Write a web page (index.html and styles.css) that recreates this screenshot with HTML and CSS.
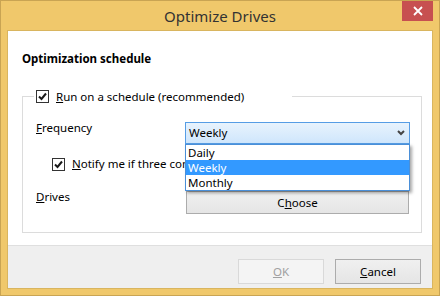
FILE: index.html
```html
<!DOCTYPE html>
<html>
<head>
    <title>Optimize Drives</title>
    <link rel="stylesheet" href="styles.css">
</head>
<body>
    <div class="window">
        <div class="titlebar">
            <span></span>
            <div class="title">Optimize Drives</div>
            <div class="close">
                <svg width="10" height="10" viewBox="0 0 10 10"><path d="M1 1L9 9M9 1L1 9" stroke="#fff" stroke-width="1.8" fill="none"/></svg>
            </div>
        </div>

        <div class="client">
            <div class="main">
                <h1 class="heading">Optimization schedule</h1>

                <fieldset class="group">
                    <legend class="check">
                        <span class="box"><svg width="11" height="11" viewBox="0 0 11 11"><path d="M2 5.5L4.5 8L9 2.5" stroke="#1a1a1a" stroke-width="2" fill="none"/></svg></span>
                        <span><u>R</u>un on a schedule (recommended)</span>
                    </legend>

                    <div class="row freq">
                        <span class="label"><u>F</u>requency</span>
                        <div class="combo">
                            <span>Weekly</span>
                            <svg width="8" height="6" viewBox="0 0 8 6"><path d="M1 1L4 4L7 1" stroke="#444" stroke-width="2" fill="none"/></svg>
                            <!-- open drop-down, covers the row below -->
                            <ul class="list">
                                <li>Daily</li>
                                <li class="sel">Weekly</li>
                                <li>Monthly</li>
                            </ul>
                        </div>
                    </div>

                    <div class="row notify check">
                        <span class="box"><svg width="11" height="11" viewBox="0 0 11 11"><path d="M2 5.5L4.5 8L9 2.5" stroke="#1a1a1a" stroke-width="2" fill="none"/></svg></span>
                        <span><u>N</u>otify me if three consecutive scheduled runs are missed</span>
                    </div>

                    <div class="row drives">
                        <span class="label"><u>D</u>rives</span>
                        <button class="btn wide">C<u>h</u>oose</button>
                    </div>
                </fieldset>
            </div>

            <div class="footer">
                <button class="btn" disabled><u>O</u>K</button>
                <button class="btn"><u>C</u>ancel</button>
            </div>
        </div>
    </div>
</body>
</html>
```

FILE: styles.css
```css
* { box-sizing: border-box; }
body { margin: 0; font-family: "Noto Sans", "Open Sans", sans-serif; font-size: 11.5px; color: #000; }

.window { width: 440px; height: 296px; background: #f0c86b; border: 1px solid #c9a453; padding: 0 6px 6px; display: flex; flex-direction: column; }
.titlebar { height: 29px; display: grid; grid-template-columns: 31px 1fr 31px; align-items: start; }
.title { text-align: center; font-size: 15px; line-height: 20px; color: #333; padding-top: 5px; }
.close { height: 20px; background: #c75050; display: flex; align-items: center; justify-content: center; }

.client { flex: 1; background: #fff; border: 1px solid #d9b55f; display: flex; flex-direction: column; }
.main { height: 214px; padding: 0 11px 0 14px; }
.heading { margin: 20px 0 0; font-size: 11.5px; line-height: 16px; font-weight: bold; }

.group { margin: 21px 0 0; height: 145px; border: 1px solid #dcdcdc; padding: 0 11px; }
.group legend { width: 258px; height: 17px; padding: 0 0 0 2px; }

.check { display: flex; align-items: center; gap: 7px; line-height: 17px; }
.box { width: 13px; height: 13px; border: 1px solid #333; background: #fff; display: flex; align-items: center; justify-content: center; flex: none; }

.row { display: flex; align-items: flex-start; padding-left: 2px; }
.label { width: 149px; line-height: 16px; margin-top: -2px; }

.freq { margin-top: 17px; }
.combo { position: relative; width: 225px; height: 22px; border: 1px solid #569de5; background: linear-gradient(#e8f3fd, #cfe6fc); display: flex; align-items: center; justify-content: space-between; padding: 0 4px 0 3px; line-height: 20px; }
.list { position: absolute; top: 21px; left: -1px; width: 225px; margin: 0; padding: 0; list-style: none; background: #fff; border: 1px solid #4a8fd8; box-shadow: 2px 2px 3px rgba(0, 0, 0, 0.35); z-index: 2; }
.list li { height: 15px; line-height: 15px; padding-left: 2px; }
.list .sel { background: #3399ff; color: #fff; }

.notify { margin-top: 12px; padding-left: 18px; line-height: 16px; align-items: center; white-space: nowrap; }
.drives { margin-top: 19px; }

.btn { font-family: inherit; font-size: 11.5px; color: #000; width: 86px; height: 25px; border: 1px solid #acacac; background: linear-gradient(#f0f0f0, #e5e5e5); padding: 0; }
.btn:disabled { color: #a0a0a0; border-color: #d9d9d9; background: #f4f4f4; }
.wide { width: 223px; height: 23px; margin-left: 1px; }

.footer { flex: 1; background: #efefef; border-top: 1px solid #dfdfdf; display: flex; justify-content: flex-end; gap: 11px; padding: 13px 11px 0 0; }
```
